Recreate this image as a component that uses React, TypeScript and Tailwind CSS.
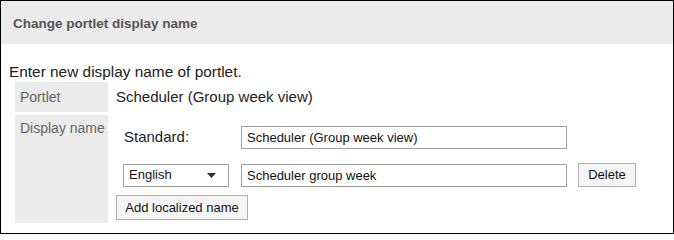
import React from 'react';

const font = { fontFamily: '"Liberation Sans", Arial, sans-serif' };

function TextBox({ value }: { value: string }) {
  return (
    <input
      type="text"
      defaultValue={value}
      className="w-[326px] h-[23px] border border-[#a0a0a0] bg-white px-[5px] text-[13px] text-[#111] outline-none"
      style={font}
    />
  );
}

function PlainButton({ label, className }: { label: string; className?: string }) {
  return (
    <button
      type="button"
      className={
        'flex items-center justify-center border border-[#b0b0b0] bg-[#f5f5f5] text-[13px] text-[#111] ' +
        (className ?? '')
      }
      style={font}
    >
      {label}
    </button>
  );
}

export default function App() {
  return (
    <div
      className="w-[674px] h-[234px] border border-black bg-white text-[#333] overflow-hidden"
      style={font}
    >
      {/* Header */}
      <div className="h-[43px] bg-[#ebebeb] flex items-center pl-[12px] pt-[4px]">
        <span className="text-[13.5px] font-bold text-[#555]">Change portlet display name</span>
      </div>

      <div className="mt-[19px] pl-[8px] text-[15.4px] leading-[18px] text-[#222]">
        Enter new display name of portlet.
      </div>

      {/* Settings table */}
      <div className="mt-[1px] ml-[14px] flex flex-col gap-[3px]">
        <div className="flex gap-[3px]">
          <div className="w-[93px] h-[30px] bg-[#ebebeb] flex items-center pl-[5px] text-[14px] text-[#666]">
            Portlet
          </div>
          <div className="flex items-center pl-[5px] text-[15px] text-[#222]">
            Scheduler (Group week view)
          </div>
        </div>

        <div className="flex gap-[3px]">
          <div className="w-[93px] h-[108px] bg-[#ebebeb] pl-[5px] pt-[5px] text-[14px] leading-[16px] text-[#666]">
            Display name
          </div>
          <div className="flex flex-col pt-[11px]">
            <div className="flex items-center h-[23px]">
              <span className="ml-[13px] w-[117px] text-[15px] text-[#222]">Standard:</span>
              <TextBox value="Scheduler (Group week view)" />
            </div>

            <div className="flex items-center mt-[14px]">
              <div className="ml-[12px] w-[106px] h-[23px] border border-[#a0a0a0] bg-white flex items-center justify-between pl-[5px] pr-[12px] text-[13px] text-[#111]">
                <span>English</span>
                <svg width="9" height="5" viewBox="0 0 9 5">
                  <path d="M0 0 L9 0 L4.5 5 Z" fill="#333" />
                </svg>
              </div>
              <div className="ml-[12px]">
                <TextBox value="Scheduler group week" />
              </div>
              <PlainButton label="Delete" className="ml-[11px] w-[58px] h-[24px]" />
            </div>

            <PlainButton label="Add localized name" className="mt-[8px] ml-[5px] w-[132px] h-[25px]" />
          </div>
        </div>
      </div>
    </div>
  );
}
